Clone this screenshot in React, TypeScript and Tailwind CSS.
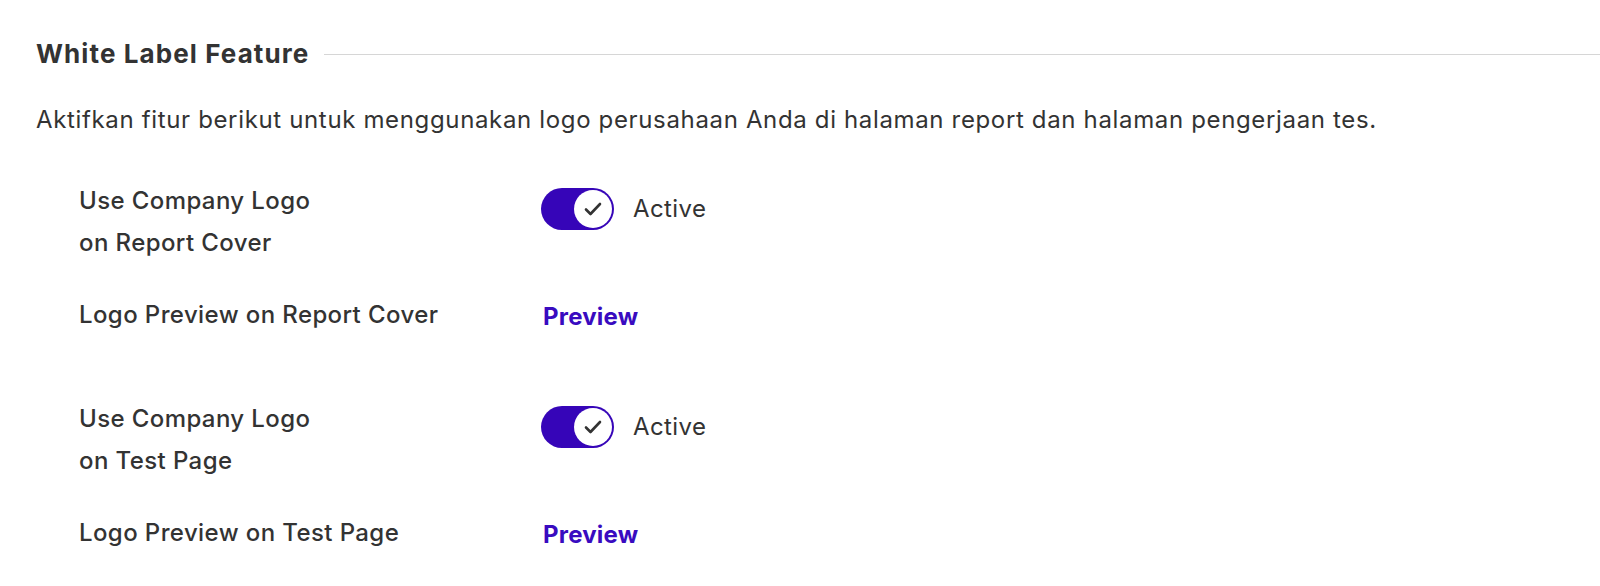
import React from 'react'

const Toggle = () => {
  return (
    <div className="self-start flex items-center gap-[19px] mt-2">
      <div className="relative w-[73px] h-[42px] rounded-full bg-[#3605b8] flex items-center justify-end pr-[2px]">
        <div className="w-[38px] h-[38px] rounded-full bg-white flex items-center justify-center">
          <svg width="18" height="14" viewBox="0 0 18 14" fill="none">
            <path d="M2 7.5L6.5 12L16 2" stroke="#333333" strokeWidth="2.6" strokeLinecap="round" strokeLinejoin="round" />
          </svg>
        </div>
      </div>
      <span className="text-[24px] tracking-[0.4px] text-[#333] leading-[42px]">Active</span>
    </div>
  )
}

const Group = ({ title, preview }: { title: string; preview: string }) => {
  return (
    <div className="flex flex-col gap-[30px]">
      <div className="flex">
        <div className="w-[462px] text-[24px] tracking-[0.4px] font-medium text-[#333] leading-[42px]">
          <div>Use Company Logo</div>
          <div>{title}</div>
        </div>
        <Toggle />
      </div>
      <div className="flex">
        <div className="w-[462px] text-[24px] tracking-[0.4px] font-medium text-[#333] leading-[42px]">{preview}</div>
        <a href="#" className="ml-[2px] text-[24px] tracking-[0.2px] font-bold text-[#390bc0] leading-[46px]">
          Preview
        </a>
      </div>
    </div>
  )
}

const App = () => {
  return (
    <div className="bg-white min-h-[586px] pl-9 pt-[38px] font-['Inter',sans-serif]">
      <div className="flex items-center gap-[15px]">
        <h2 className="text-[26px] tracking-[1.1px] font-bold text-[#333] leading-8">White Label Feature</h2>
        <div className="flex-1 h-px bg-[#d6d6d6]"></div>
      </div>
      <p className="mt-[34px] text-[24px] tracking-[0.65px] text-[#333] leading-8">
        Aktifkan fitur berikut untuk menggunakan logo perusahaan Anda di halaman report dan halaman pengerjaan tes.
      </p>
      <div className="pl-[43px] mt-[44px] flex flex-col gap-[58px]">
        <Group title="on Report Cover" preview="Logo Preview on Report Cover" />
        <Group title="on Test Page" preview="Logo Preview on Test Page" />
      </div>
    </div>
  )
}

export default App
